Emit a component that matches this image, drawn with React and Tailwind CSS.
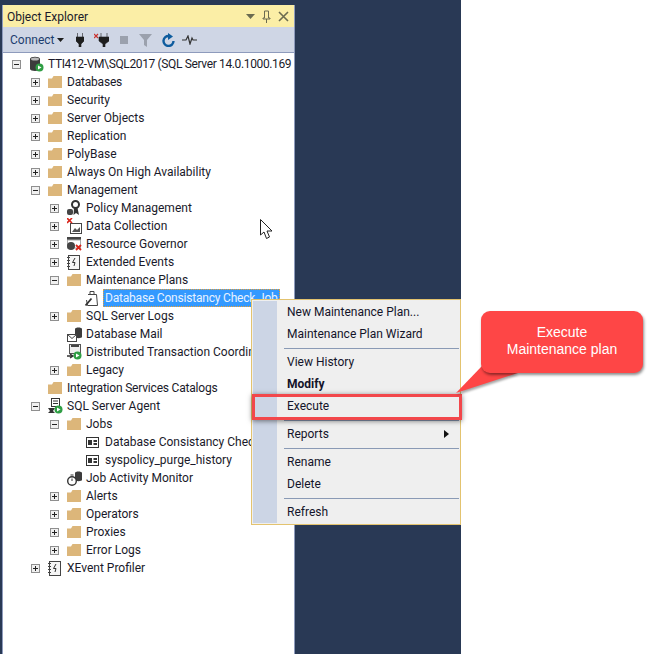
const Folder = () => (
  <svg width="14" height="12" viewBox="0 0 14 12" className="shrink-0">
    <path d="M0 2.5 L0 12 L14 12 L14 0 L5.5 0 L4 2.5 Z" fill="#dcb67a" />
  </svg>
);

const Expander = ({ kind }) => (
  <svg width="9" height="9" viewBox="0 0 9 9" className="shrink-0">
    <rect x="0.5" y="0.5" width="8" height="8" fill="#f0f0f0" stroke="#8f8f8f" />
    <path d={kind === "+" ? "M2 4.5H7M4.5 2V7" : "M2 4.5H7"} stroke="#222" />
  </svg>
);

const Server = () => (
  <svg width="15" height="16" viewBox="0 0 15 16">
    <path d="M1 3 C1 0 11 0 11 3 V13 C11 15.5 1 15.5 1 13 Z" fill="#3c3c3c" />
    <ellipse cx="6" cy="3" rx="4" ry="1.5" fill="#b8b8b8" />
    <circle cx="10.5" cy="11.5" r="4" fill="#2f9e44" />
    <path d="M9 9.5 L12.5 11.5 L9 13.5 Z" fill="#fff" />
  </svg>
);

const Policy = () => (
  <svg width="14" height="16" viewBox="0 0 14 16">
    <circle cx="8.5" cy="4.5" r="3.5" fill="none" stroke="#333" strokeWidth="2" />
    <path d="M7 8 L6.5 15 L9 13 L12 15 L10.5 8 Z" fill="#333" />
    <rect x="0" y="9" width="6" height="6" rx="2" fill="#444" />
  </svg>
);

const DataColl = () => (
  <svg width="15" height="17" viewBox="0 0 15 17">
    <rect x="3.5" y="5.5" width="11" height="10" fill="#fff" stroke="#444" />
    <path d="M5 14 L8 10 L10 12 L13 9 V14 Z" fill="#555" />
    <path d="M0 0 L5 5 M5 0 L0 5" stroke="#d9261c" strokeWidth="1.6" />
  </svg>
);

const Governor = () => (
  <svg width="15" height="14" viewBox="0 0 15 14">
    <rect x="0" y="0" width="14" height="3" fill="#444" />
    <rect x="0.5" y="3" width="13" height="8" fill="#fff" stroke="#aaa" />
    <circle cx="4" cy="9" r="4" fill="#444" />
    <path d="M9 8 L14 13 M14 8 L9 13" stroke="#d9261c" strokeWidth="1.8" />
  </svg>
);

const Events = () => (
  <svg width="13" height="15" viewBox="0 0 13 15">
    <rect x="1.5" y="0.5" width="11" height="14" fill="#f6f6f6" stroke="#444" />
    <path d="M0 2.5H3M0 5.5H3M0 8.5H3M0 11.5H3" stroke="#444" />
    <path d="M8 3 L5.5 7.5 H8 L7 11" fill="none" stroke="#333" />
  </svg>
);

const Plan = () => (
  <svg width="13" height="16" viewBox="0 0 13 16">
    <path d="M3 4.5 H11.5 L12.5 15.5 H2.5 L1.5 10" fill="#fff" stroke="#444" />
    <path d="M5 4.5 V1.5 H9 V4.5" fill="none" stroke="#444" />
    <path d="M0.5 15.5 L6.5 8.5" stroke="#333" strokeWidth="1.8" />
  </svg>
);

const Mail = () => (
  <svg width="15" height="15" viewBox="0 0 15 15">
    <path d="M8 2 C8 0 15 0 15 2 V10 C15 11.5 8 11.5 8 10 Z" fill="#3c3c3c" />
    <rect x="0.5" y="7.5" width="9" height="7" fill="#fff" stroke="#444" />
    <path d="M0.5 7.5 L5 11.5 L9.5 7.5" fill="none" stroke="#444" />
  </svg>
);

const Dtc = () => (
  <svg width="15" height="16" viewBox="0 0 15 16">
    <rect x="2.5" y="0.5" width="11" height="9" fill="#eee" stroke="#555" />
    <path d="M4 2H12" stroke="#444" strokeWidth="2" />
    <path d="M0 12H5M3 10L6 12L3 14" fill="none" stroke="#333" strokeWidth="1.4" />
    <circle cx="10.5" cy="11.5" r="4" fill="#2f9e44" />
    <path d="M9 9.5 L12.5 11.5 L9 13.5 Z" fill="#fff" />
  </svg>
);

const Agent = () => (
  <svg width="15" height="16" viewBox="0 0 15 16">
    <rect x="3.5" y="0.5" width="8" height="8" fill="#fff" stroke="#333" />
    <path d="M5 3H10M5 5.5H10" stroke="#333" />
    <path d="M0 10H7L5 13L7 15H0L2 13Z" fill="#333" />
    <circle cx="10.5" cy="11.5" r="4" fill="#2f9e44" />
    <path d="M9 9.5 L12.5 11.5 L9 13.5 Z" fill="#fff" />
  </svg>
);

const Job = () => (
  <svg width="13" height="11" viewBox="0 0 13 11" className="ml-[1px]">
    <rect x="0.5" y="0.5" width="12" height="10" fill="#fff" stroke="#333" />
    <rect x="2" y="3" width="4" height="5" fill="#333" />
    <rect x="7.5" y="3" width="3.5" height="2" fill="#333" />
    <rect x="7.5" y="6" width="3.5" height="2" fill="#333" />
  </svg>
);

const Monitor = () => (
  <svg width="15" height="15" viewBox="0 0 15 15">
    <path d="M8 2 C8 0 15 0 15 2 V9 C15 10.5 8 10.5 8 9 Z" fill="#3c3c3c" />
    <circle cx="5" cy="10" r="4.3" fill="#fff" stroke="#333" strokeWidth="1.4" />
    <path d="M3.5 4H6.5M5 10V7.5" stroke="#333" />
  </svg>
);

const rows = [
  { d: 0, e: "-", i: <Server />, t: "TTI412-VM\\SQL2017 (SQL Server 14.0.1000.169", tx: "tracking-[-0.36px]" },
  { d: 1, e: "+", i: <Folder />, t: "Databases", tx: "tracking-[-0.2px]" },
  { d: 1, e: "+", i: <Folder />, t: "Security" },
  { d: 1, e: "+", i: <Folder />, t: "Server Objects" },
  { d: 1, e: "+", i: <Folder />, t: "Replication" },
  { d: 1, e: "+", i: <Folder />, t: "PolyBase" },
  { d: 1, e: "+", i: <Folder />, t: "Always On High Availability" },
  { d: 1, e: "-", i: <Folder />, t: "Management" },
  { d: 2, e: "+", i: <Policy />, t: "Policy Management" },
  { d: 2, e: "+", i: <DataColl />, t: "Data Collection" },
  { d: 2, e: "+", i: <Governor />, t: "Resource Governor" },
  { d: 2, e: "+", i: <Events />, t: "Extended Events" },
  { d: 2, e: "-", i: <Folder />, t: "Maintenance Plans" },
  { d: 3, i: <Plan />, t: "Database Consistancy Check Job", selected: true, tx: "tracking-[-0.2px]" },
  { d: 2, e: "+", i: <Folder />, t: "SQL Server Logs" },
  { d: 2, i: <Mail />, t: "Database Mail" },
  { d: 2, i: <Dtc />, t: "Distributed Transaction Coordinator" },
  { d: 2, e: "+", i: <Folder />, t: "Legacy" },
  { d: 1, i: <Folder />, t: "Integration Services Catalogs", tx: "tracking-[-0.2px]" },
  { d: 1, e: "-", i: <Agent />, t: "SQL Server Agent" },
  { d: 2, e: "-", i: <Folder />, t: "Jobs" },
  { d: 3, i: <Job />, t: "Database Consistancy Check Job", job: true },
  { d: 3, i: <Job />, t: "syspolicy_purge_history", job: true },
  { d: 2, i: <Monitor />, t: "Job Activity Monitor" },
  { d: 2, e: "+", i: <Folder />, t: "Alerts" },
  { d: 2, e: "+", i: <Folder />, t: "Operators" },
  { d: 2, e: "+", i: <Folder />, t: "Proxies" },
  { d: 2, e: "+", i: <Folder />, t: "Error Logs" },
  { d: 1, e: "+", i: <Events />, t: "XEvent Profiler" },
];

const depthPad = ["pl-[9px]", "pl-[28px]", "pl-[47px]", "pl-[65px]"];

function Row({ d, e, i, t, selected, tx, job }) {
  return (
    <div className={`flex h-[18px] items-center ${depthPad[d]}`}>
      <div className="flex w-[17px] shrink-0 items-center">{e ? <Expander kind={e} /> : null}</div>
      <div className="flex w-[19px] shrink-0 items-center">{i}</div>
      <span
        className={`whitespace-nowrap ${tx || ""} ${job ? "pl-[1px]" : ""} ${
          selected
            ? "-ml-[1px] flex h-[18px] items-center border border-dotted border-[#f0a030] bg-[#3399ff] pl-[1px] pr-[1px] text-[#e8f2ff]"
            : ""
        }`}
      >
        {t}
      </span>
    </div>
  );
}

const Sep = () => <div className="mb-[2px] ml-[32px] mr-[1px] mt-[3px] h-px bg-[#8a9ab5]" />;

const Item = ({ children, bold, arrow }) => (
  <div className={`flex h-[22px] items-center pl-[35px] pr-[11px] ${bold ? "font-bold" : ""}`}>
    <span className="flex-1">{children}</span>
    {arrow ? (
      <svg width="5" height="8" viewBox="0 0 5 8">
        <path d="M0 0L5 4L0 8Z" fill="#111" />
      </svg>
    ) : null}
  </div>
);

export default function App() {
  return (
    <div className="relative flex h-[654px] w-[654px] overflow-hidden bg-white font-['Roboto',sans-serif] text-[12px] text-[#1a1a2a]">
      <div className="h-full w-[461px] bg-[#293955] pl-[2px] pt-[5px]">
        <div className="flex h-[649px] w-[293px] flex-col border-x border-[#8e9bbc] bg-white">
          <div className="flex h-[22px] shrink-0 items-center justify-between bg-[#fbeea6] pl-[4px] pr-[5px] pt-[1px]">
            <span>Object Explorer</span>
            <div className="flex items-center gap-[7px]">
              <svg width="9" height="5" viewBox="0 0 9 5"><path d="M0 0H9L4.5 5Z" fill="#6b6b50" /></svg>
              <svg width="9" height="13" viewBox="0 0 9 13"><path d="M2.5 1H6.5V8H8V9H1V8H2.5ZM4.5 9V13" fill="none" stroke="#6b6b50" /></svg>
              <svg width="11" height="11" viewBox="0 0 11 11"><path d="M1 1L10 10M10 1L1 10" stroke="#6b6b50" strokeWidth="1.6" /></svg>
            </div>
          </div>
          <div className="flex h-[26px] shrink-0 items-center border-b border-[#8e9bbc] bg-[#cfd6e5] pl-[7px] pt-[1px]">
            <span className="w-[43px] text-[#1c3d6e]">Connect</span>
            <svg width="7" height="4" viewBox="0 0 7 4" className="ml-[4px]"><path d="M0 0H7L3.5 4Z" fill="#1e1e1e" /></svg>
            <svg width="8" height="14" viewBox="0 0 8 14" className="ml-[12px]">
              <path d="M1.5 0V4M6.5 0V4M0 4H8V8L5 11V14H3V11L0 8Z" fill="#1e1e1e" stroke="#1e1e1e" strokeWidth="0.6" />
            </svg>
            <svg width="15" height="14" viewBox="0 0 15 14" className="ml-[10px]">
              <path d="M7 0V4M13 0V4M5 4H15V8L11 11V14H9V11L5 8Z" fill="#1e1e1e" stroke="#1e1e1e" strokeWidth="0.6" />
              <path d="M0 1L4 5M4 1L0 5" stroke="#c9302c" strokeWidth="1.2" />
            </svg>
            <div className="ml-[11px] h-[8px] w-[8px] bg-[#9ba1ad]" />
            <svg width="13" height="13" viewBox="0 0 13 13" className="ml-[11px]">
              <path d="M0 0H13L8 6V13L5 11V6Z" fill="#9ba1ad" />
            </svg>
            <svg width="13" height="14" viewBox="0 0 13 14" className="ml-[10px]">
              <path d="M7 3A5 5 0 1 0 11.5 8" fill="none" stroke="#0e5c9e" strokeWidth="2.4" />
              <path d="M6 0L11 3.5L6 7Z" fill="#0e5c9e" />
            </svg>
            <svg width="15" height="10" viewBox="0 0 15 10" className="ml-[7px]">
              <path d="M0 5H4L6 1L8 9L10 3L11 5H15" fill="none" stroke="#333" strokeWidth="1.2" />
            </svg>
          </div>
          <div className="flex-1 overflow-hidden pt-[2px]">
            {rows.map((r, n) => <Row key={n} {...r} />)}
          </div>
        </div>
      </div>

      {/* mouse cursor */}
      <svg width="14" height="21" viewBox="0 0 14 21" className="absolute left-[260px] top-[219px]">
        <path d="M0.5 0.5V16L4 13L6.5 19.5L9.5 18L7 12H12Z" fill="#fff" stroke="#222" />
      </svg>

      {/* context menu */}
      <div className="absolute left-[251px] top-[299px] h-[226px] w-[210px] border border-[#e3c36f] bg-[#efefef] py-[1px] text-[#14142a]">
        <div className="absolute bottom-[1px] left-[1px] top-[1px] w-[24px] bg-[#ccd5e5]" />
        <div className="relative">
          <Item>New Maintenance Plan...</Item>
          <Item>Maintenance Plan Wizard</Item>
          <Sep />
          <Item>View History</Item>
          <Item bold>Modify</Item>
          <Item>Execute</Item>
          <Sep />
          <Item arrow>Reports</Item>
          <Sep />
          <Item>Rename</Item>
          <Item>Delete</Item>
          <Sep />
          <Item>Refresh</Item>
        </div>
      </div>

      {/* highlight around Execute */}
      <div className="absolute left-[252px] top-[394px] h-[26px] w-[210px] border-[3px] border-[#f2474b] shadow-[0_1px_5px_rgba(0,0,0,0.5)]" />

      {/* callout */}
      <svg width="70" height="30" viewBox="0 0 70 30" className="absolute left-[455px] top-[366px] drop-shadow-[1px_2px_1px_rgba(0,0,0,0.35)]">
        <path d="M27 0L1 27L63 7Z" fill="#fe4646" />
      </svg>
      <div className="absolute left-[481px] top-[311px] flex h-[62px] w-[162px] flex-col items-center justify-center rounded-[9px] bg-[#fe4646] pb-[3px] font-['Liberation_Sans',sans-serif] text-[14px] leading-[17px] text-white shadow-[1px_2px_3px_rgba(0,0,0,0.45)]">
        <span>Execute</span>
        <span>Maintenance plan</span>
      </div>
    </div>
  );
}
